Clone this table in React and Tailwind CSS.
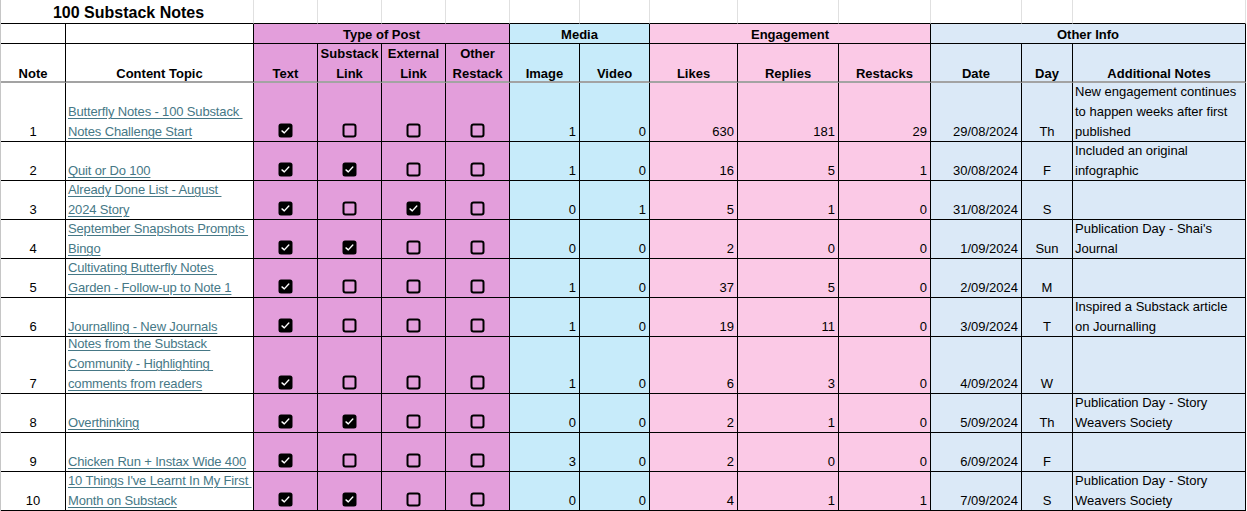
import React from "react";

const P = "bg-[#e39edb]";
const M = "bg-[#c7ebfa]";
const E = "bg-[#fbc9e6]";
const O = "bg-[#dbe9f7]";
const W = "bg-white";

const rows = [
  { topic: ["Butterfly Notes - 100 Substack\u00a0", "Notes Challenge Start"], c: [1, 0, 0, 0], img: 1, vid: 0, likes: 630, rep: 181, res: 29, date: "29/08/2024", day: "Th", notes: ["New engagement continues", "to happen weeks after first", "published"] },
  { topic: ["Quit or Do 100"], c: [1, 1, 0, 0], img: 1, vid: 0, likes: 16, rep: 5, res: 1, date: "30/08/2024", day: "F", notes: ["Included an original", "infographic"] },
  { topic: ["Already Done List - August\u00a0", "2024 Story"], c: [1, 0, 1, 0], img: 0, vid: 1, likes: 5, rep: 1, res: 0, date: "31/08/2024", day: "S", notes: [] },
  { topic: ["September Snapshots Prompts\u00a0", "Bingo"], c: [1, 1, 0, 0], img: 0, vid: 0, likes: 2, rep: 0, res: 0, date: "1/09/2024", day: "Sun", notes: ["Publication Day - Shai's", "Journal"] },
  { topic: ["Cultivating Butterfly Notes\u00a0", "Garden - Follow-up to Note 1"], c: [1, 0, 0, 0], img: 1, vid: 0, likes: 37, rep: 5, res: 0, date: "2/09/2024", day: "M", notes: [] },
  { topic: ["Journalling - New Journals"], c: [1, 0, 0, 0], img: 1, vid: 0, likes: 19, rep: 11, res: 0, date: "3/09/2024", day: "T", notes: ["Inspired a Substack article", "on Journalling"] },
  { topic: ["Notes from the Substack\u00a0", "Community - Highlighting\u00a0", "comments from readers"], c: [1, 0, 0, 0], img: 1, vid: 0, likes: 6, rep: 3, res: 0, date: "4/09/2024", day: "W", notes: [] },
  { topic: ["Overthinking"], c: [1, 1, 0, 0], img: 0, vid: 0, likes: 2, rep: 1, res: 0, date: "5/09/2024", day: "Th", notes: ["Publication Day - Story", "Weavers Society"] },
  { topic: ["Chicken Run + Instax Wide 400"], c: [1, 0, 0, 0], img: 3, vid: 0, likes: 2, rep: 0, res: 0, date: "6/09/2024", day: "F", notes: [] },
  { topic: ["10 Things I've Learnt In My First\u00a0", "Month on Substack"], c: [1, 1, 0, 0], img: 0, vid: 0, likes: 4, rep: 1, res: 1, date: "7/09/2024", day: "S", notes: ["Publication Day - Story", "Weavers Society"] },
];

function Box({ on }) {
  if (on) {
    return (
      <svg width="15" height="15" viewBox="0 0 15 15" className="block">
        <rect x="0.5" y="0.5" width="14" height="14" rx="2.5" fill="#000" />
        <path d="M4 7.9 L6.3 9.9 L10.8 5" stroke="#fff" strokeWidth="1.4" fill="none" strokeLinecap="round" strokeLinejoin="round" />
      </svg>
    );
  }
  return (
    <svg width="15" height="15" viewBox="0 0 15 15" className="block">
      <rect x="1.5" y="1.5" width="12" height="12" rx="2" fill="none" stroke="#000" strokeWidth="2" />
    </svg>
  );
}

function Cell({ bg, className = "", children }) {
  return (
    <div className={`border-r border-b border-black flex overflow-hidden ${bg} ${className}`}>
      {children}
    </div>
  );
}

function HeadCell({ bg, children }) {
  return (
    <div className={`border-r border-b-2 border-r-black border-b-[#a3a3a3] flex items-end justify-center text-center font-bold ${bg}`}>
      <div className="translate-y-[3px]">{children}</div>
    </div>
  );
}

export default function App() {
  return (
    <div className="w-[1247px] h-[511px] bg-white overflow-hidden font-['Liberation_Sans',Arial,sans-serif] text-[13px] leading-5 text-black">
      <div className="border-l border-[#c6c6c6] w-[1246px] grid grid-cols-[65px_188px_64px_64px_64px_64px_70px_70px_88px_101px_92px_91px_51px_173px] grid-rows-[24px_20px_39px_59px_39px_39px_39px_39px_39px_57px_39px_39px_39px]">
        {/* Title row */}
        <div className="col-span-2 border-r border-b border-r-[#e0e0e0] border-b-black flex items-center justify-center">
          <span className="text-[16px] font-bold leading-none pt-[2px] pl-[3px]">100 Substack Notes</span>
        </div>
        {Array.from({ length: 12 }).map((_, i) => (
          <div key={i} className="border-r border-b border-r-[#e0e0e0] border-b-black" />
        ))}

        {/* Group header row */}
        <Cell bg={W} />
        <Cell bg={W} />
        <Cell bg={P} className="col-span-4 items-center justify-center font-bold pt-[2px]">Type of Post</Cell>
        <Cell bg={M} className="col-span-2 items-center justify-center font-bold pt-[2px]">Media</Cell>
        <Cell bg={E} className="col-span-3 items-center justify-center font-bold pt-[2px]">Engagement</Cell>
        <Cell bg={O} className="col-span-3 items-center justify-center font-bold pt-[2px]">Other Info</Cell>

        {/* Header row */}
        <HeadCell bg={W}>Note</HeadCell>
        <HeadCell bg={W}>Content Topic</HeadCell>
        <HeadCell bg={P}>Text</HeadCell>
        <HeadCell bg={P}>Substack<br />Link</HeadCell>
        <HeadCell bg={P}>External<br />Link</HeadCell>
        <HeadCell bg={P}>Other<br />Restack</HeadCell>
        <HeadCell bg={M}>Image</HeadCell>
        <HeadCell bg={M}>Video</HeadCell>
        <HeadCell bg={E}>Likes</HeadCell>
        <HeadCell bg={E}>Replies</HeadCell>
        <HeadCell bg={E}>Restacks</HeadCell>
        <HeadCell bg={O}>Date</HeadCell>
        <HeadCell bg={O}>Day</HeadCell>
        <HeadCell bg={O}>Additional Notes</HeadCell>

        {/* Data rows */}
        {rows.map((r, i) => (
          <React.Fragment key={i}>
            <Cell bg={W} className="items-end justify-center"><div className="translate-y-px">{i + 1}</div></Cell>
            <Cell bg={W} className="items-end pl-[2px] text-[#467886] tracking-[-0.15px]">
              <div className="translate-y-px">
                {r.topic.map((t, j) => (
                  <div key={j} className="whitespace-nowrap"><span className="underline decoration-1 underline-offset-[2px]">{t}</span></div>
                ))}
              </div>
            </Cell>
            {r.c.map((v, j) => (
              <Cell key={j} bg={P} className="items-end justify-center pb-[3px]">
                <Box on={!!v} />
              </Cell>
            ))}
            <Cell bg={M} className="items-end justify-end pr-[3px]"><div className="translate-y-px">{r.img}</div></Cell>
            <Cell bg={M} className="items-end justify-end pr-[3px]"><div className="translate-y-px">{r.vid}</div></Cell>
            <Cell bg={E} className="items-end justify-end pr-[3px]"><div className="translate-y-px">{r.likes}</div></Cell>
            <Cell bg={E} className="items-end justify-end pr-[3px]"><div className="translate-y-px">{r.rep}</div></Cell>
            <Cell bg={E} className="items-end justify-end pr-[3px]"><div className="translate-y-px">{r.res}</div></Cell>
            <Cell bg={O} className="items-end justify-end pr-[3px]"><div className="translate-y-px">{r.date}</div></Cell>
            <Cell bg={O} className="items-end justify-center"><div className="translate-y-px">{r.day}</div></Cell>
            <Cell bg={O} className="items-end pl-[2px]">
              <div className="translate-y-px">
                {r.notes.map((t, j) => (
                  <div key={j} className="whitespace-nowrap">{t}</div>
                ))}
              </div>
            </Cell>
          </React.Fragment>
        ))}
      </div>
    </div>
  );
}
